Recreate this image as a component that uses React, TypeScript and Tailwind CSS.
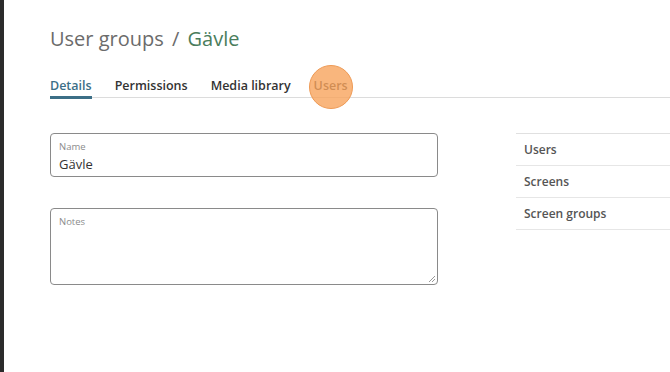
import React from 'react'

const tabs = ['Details', 'Permissions', 'Media library', 'Users']
const related = ['Users', 'Screens', 'Screen groups']

export default function App() {
  return (
    <div className="flex h-[372px] w-[670px] overflow-hidden bg-white" style={{ fontFamily: '"Open Sans", "Noto Sans", sans-serif' }}>
      <div className="w-[4px] shrink-0 bg-[#2b2b2b]" />
      <div className="flex-1 pl-[46px] pt-[25px]">
        <h1 className="text-[20px] leading-[28px] text-[#6b6b6b]">
          User groups <span className="mx-[3px]">/</span> <span className="text-[#4a7d5c]">Gävle</span>
        </h1>

        {/* Tabs */}
        <div className="relative mt-[24px] flex gap-[23px] border-b border-[#dcdcdc] text-[12.5px] font-semibold leading-[18px]">
          {tabs.map((t, i) => (
            <div
              key={t}
              className={
                i === 0
                  ? '-mb-[2px] border-b-[3px] border-[#3c6f87] pb-[1px] text-[#3c6f87]'
                  : 'pb-[2px] text-[#333]'
              }
            >
              {t}
            </div>
          ))}
          <div className="absolute left-[259px] top-[-12px] h-[44px] w-[44px] rounded-full border border-[#ee9a55] bg-[#f8a45c]/80" />
        </div>

        <div className="mt-[35px] flex">
          {/* Form */}
          <div className="w-[388px]">
            <div className="h-[44px] rounded-[4px] border border-[#8a8a8a] px-[8px] pt-[7px]">
              <div className="text-[9.5px] leading-[12px] text-[#8c8c8c]">Name</div>
              <div className="mt-[2px] text-[13px] leading-[18px] text-[#333]">Gävle</div>
            </div>
            <div className="relative mt-[31px] h-[77px] rounded-[4px] border border-[#8a8a8a] px-[8px] pt-[7px]">
              <div className="text-[9.5px] leading-[12px] text-[#8c8c8c]">Notes</div>
              <svg className="absolute bottom-[1px] right-[1px]" width="8" height="8" viewBox="0 0 8 8">
                <path d="M7 1 L1 7 M7 4 L4 7" stroke="#999" strokeWidth="1" />
              </svg>
            </div>
          </div>

          {/* Related */}
          <div className="ml-[78px] flex-1 border-t border-[#e0e0e0]">
            {related.map((r) => (
              <div key={r} className="h-[32px] border-b border-[#e6e6e6] pl-[8px] pt-[7px] text-[12px] font-semibold text-[#555]">
                {r}
              </div>
            ))}
          </div>
        </div>
      </div>
    </div>
  )
}
